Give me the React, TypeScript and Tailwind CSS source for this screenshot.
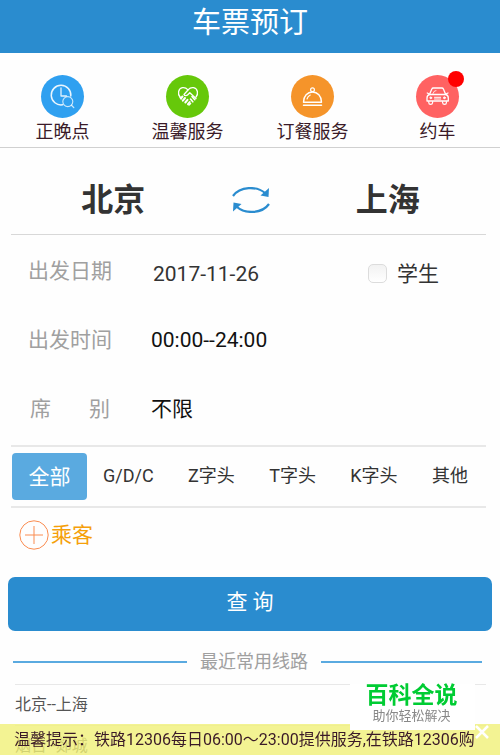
import { useState } from "react";
import type { ReactNode } from "react";

type Service = { label: string; color: string; icon: ReactNode; badge?: boolean };

const stroke = {
  fill: "none",
  stroke: "#fff",
  strokeLinecap: "round" as const,
  strokeLinejoin: "round" as const,
};

const services: Service[] = [
  {
    label: "正晚点",
    color: "bg-[#2fa0f0]",
    icon: (
      <svg viewBox="0 0 43 43" className="size-full" aria-hidden="true" {...stroke}>
        <path d="M21.5 29.8A9.800 9.800 0 1 1 29.800 21" strokeWidth="1.5" strokeOpacity=".9" />
        <path d="M20 13v8h5.5" strokeWidth="1.3" strokeOpacity=".85" />
        <circle cx="26.8" cy="26.6" r="5" strokeWidth="1.1" strokeOpacity=".75" />
        <path d="m30.5 30.3 2.3 2.3" strokeWidth="1.3" strokeOpacity=".75" />
      </svg>
    ),
  },
  {
    label: "温馨服务",
    color: "bg-[#66c80a]",
    icon: (
      <svg viewBox="0 0 43 43" className="size-full" aria-hidden="true" {...stroke}>
        <path
          d="M14 22c-2.500-3-2-8.500 2.500-9.300 2.500-.4 4 .6 5.500 2.200 1.500-1.600 3-2.600 5.500-2.200 4.500.8 5 6.300 2.500 9.300"
          strokeWidth="1.3"
        />
        <path d="m22 15-4 4.500c.6 1.600 2.800 1.300 3.800.2l2-2L30 23.500M14 22l1.500 1.700" strokeWidth="1.300" />
        <path d="m16.500 21.500-1.700 2M19 23l-2.200 2.700M21.500 24.800l-2.200 2.700M23.700 27l-1.700 2.200" strokeWidth="2" />
        <path d="m26 21.500 2.800 3.200M24.500 24l2.300 2.800M24.500 28.500l-1.500 1.500" strokeWidth="1.600" />
      </svg>
    ),
  },
  {
    label: "订餐服务",
    color: "bg-[#f5942a]",
    icon: (
      <svg viewBox="0 0 43 43" className="size-full" aria-hidden="true" {...stroke}>
        <circle cx="21.500" cy="14.700" r="1.900" strokeWidth="1.200" />
        <path d="M12.500 27.300c0-6.300 4-10.300 9-10.300s9 4 9 10.300z" strokeWidth="1.400" />
        <path d="M12.500 30.300h18" strokeWidth="1.500" />
        <path d="M16 24c.5-2 1.600-3.300 3.300-4" strokeWidth="1.100" />
      </svg>
    ),
  },
  {
    label: "约车",
    color: "bg-[#ff6262]",
    badge: true,
    icon: (
      <svg viewBox="0 0 43 43" className="size-full" aria-hidden="true" {...stroke}>
        <path d="M13.500 19.500 15.800 14c.3-.8.8-1 1.500-1h8.600c.8 0 1.200.3 1.500 1l2.300 5.500" strokeWidth="1.300" />
        <path d="M13.500 19.500h16.200c1.800.4 2.600 1.500 2.600 3.500V26H11v-3c0-2 .8-3.100 2.500-3.500Z" strokeWidth="1.300" />
        <path d="M12.800 26.500v1.300c0 2.200 3.600 2.200 3.800 0v-1.300M26.600 26.500v1.300c.2 2.200 3.800 2.200 3.800 0v-1.300M11.200 18l1.600.8M32 18l-1.600.8" strokeWidth="1.200" />
        <circle cx="14.800" cy="22.800" r=".9" fill="#fff" />
        <circle cx="28.400" cy="22.800" r=".9" fill="#fff" />
        <path d="M18.500 22.300h6.200M18.500 24h6.200" strokeWidth="1" />
        <path d="m17 18.500 1.500-2.500 1.500-.3" strokeWidth=".8" />
      </svg>
    ),
  },
];

const trainTypes = ["G/D/C", "Z字头", "T字头", "K字头", "其他"];
const recentRoutes = ["北京--上海", "烟台--郯城"];

function Field({ label, children }: { label: ReactNode; children: ReactNode }) {
  return (
    <div className="flex h-[69px] items-center text-[21px] leading-6">
      <span className="flex w-[124px] shrink-0 pl-[17px] text-[#a0a0a0]">{label}</span>
      {children}
    </div>
  );
}

export default function App() {
  const [student, setStudent] = useState(false);
  const [cities, setCities] = useState(["北京", "上海"]);
  const [noticeOpen, setNoticeOpen] = useState(true);

  return (
    <div className="relative min-h-screen bg-[#fefefe] font-[Roboto,'Noto_Sans_CJK_SC',sans-serif] text-[#333]">
      <header className="flex h-[53px] justify-center bg-[#2a8ccf]">
        <h1 className="text-[29px] leading-[46px] text-white">车票预订</h1>
      </header>

      <nav className="grid h-[95px] grid-cols-4 border-b border-[#d0d0d0] pt-[22px]">
        {services.map((s) => (
          <button key={s.label} type="button" className="flex flex-col items-center">
            <span className={`relative size-[43px] shrink-0 rounded-full ${s.color}`}>
              {s.icon}
              {s.badge && <span className="absolute -top-1 -right-[5px] size-4 rounded-full bg-[#f00]" />}
            </span>
            <span className="text-[18px] leading-7 text-[#3a1a28]">{s.label}</span>
          </button>
        ))}
      </nav>

      <main>
        <div className="mr-[14px] ml-[11px]">
          <section className="grid h-[87px] grid-cols-[1fr_38px_1fr] items-center border-b border-[#d8d8d8] pt-[18px] pl-1 text-[32px] leading-10 font-bold">
            <button type="button" className="pr-5 text-center">{cities[0]}</button>
            <button type="button" aria-label="交换" onClick={() => setCities([cities[1], cities[0]])}>
              <svg viewBox="0 0 38 26" className="h-[26px] w-[38px]" fill="none" stroke="#2a8ccf" strokeWidth="2.2" aria-hidden="true">
                <path d="M1 9C8-1 25-1 33 6" />
                <path d="m37 1-.5 9-8-1.500Z" fill="#2a8ccf" stroke="none" />
                <path d="M37 17c-7 10-24 10-32 3" />
                <path d="m1 25 .500-9 8 1.500Z" fill="#2a8ccf" stroke="none" transform="translate(0 -.5)" />
              </svg>
            </button>
            <button type="button" className="pl-5 text-center">{cities[1]}</button>
          </section>

          <section className="border-b-2 border-[#e8e8e8] pt-px pb-0.5">
            <Field label="出发日期">
              <button type="button" className="pt-1.5 pl-[18px]">2017-11-26</button>
              <label className="mr-[47px] ml-auto flex items-center gap-2.5 pt-1.5">
                <input
                  type="checkbox"
                  checked={student}
                  onChange={(e) => setStudent(e.target.checked)}
                  className="size-[19px] appearance-none rounded-[5px] border border-[#dcdcdc] bg-linear-to-b from-[#f2f2f2] to-white checked:bg-[#5aaae0]"
                />
                学生
              </label>
            </Field>
            <Field label="出发时间">
              <button type="button" className="pl-4 text-[#111]">00:00--24:00</button>
            </Field>
            <Field
              label={
                <span className="flex w-[84px] justify-between px-0.5">
                  <span>席</span>
                  <span>别</span>
                </span>
              }
            >
              <button type="button" className="pl-4 text-[#111]">不限</button>
            </Field>
          </section>

          <section className="flex h-[61px] items-center justify-between border-b-2 border-[#e8e8e8] pr-[18px] pl-px text-[18px] leading-6">
            <button type="button" className="h-[47px] w-[75px] rounded bg-[#5aaae0] text-[21px] text-white">全部</button>
            <div className="flex flex-1 items-center justify-between pb-0.5 pl-4">
              {trainTypes.map((t) => (
                <button key={t} type="button">{t}</button>
              ))}
            </div>
          </section>

          <button type="button" className="flex h-[69px] items-center gap-0.5 pb-4 pl-2 text-[21px] leading-6 text-[#f5a00a]">
            <svg viewBox="0 0 30 30" className="size-[30px]" fill="none" stroke="#fa8c50" strokeWidth="1" aria-hidden="true">
              <circle cx="15" cy="15" r="14.200" />
              <path d="M15 6v18M6 15h18" />
            </svg>
            乘客
          </button>
        </div>

        <div className="px-2">
          <button type="button" className="h-[54px] w-full rounded-[7px] bg-[#2a8ccf] pb-1 text-[21px] leading-6 text-white">
            查 询
          </button>
        </div>

        <div className="flex h-[53px] items-center gap-[13px] pt-2 pr-[18px] pl-[13px]">
          <span className="h-0.5 flex-[174] bg-[#5aaae0]" />
          <h2 className="text-[18px] leading-6 text-[#a0a0a0]">最近常用线路</h2>
          <span className="h-0.5 flex-[161] bg-[#5aaae0]" />
        </div>

        <ul className="mr-[14px] ml-[15px] text-[16px] leading-5 text-[#555]">
          {recentRoutes.map((r) => (
            <li key={r} className="border-t border-[#e8e8e8] pt-2.5 pb-2.5 last:pb-0">
              <a href="#route">{r}</a>
            </li>
          ))}
        </ul>
      </main>

      {noticeOpen && (
        <aside className="fixed inset-x-0 bottom-0 flex h-[31px] items-center overflow-hidden bg-[#f0f078]/80 pl-[14px] text-[16px] leading-6 text-[#3a1a28]">
          <p className="whitespace-nowrap">温馨提示：铁路12306每日06:00～23:00提供服务,在铁路12306购</p>
          <button type="button" aria-label="关闭" onClick={() => setNoticeOpen(false)} className="absolute top-0 right-2.5">
            <svg viewBox="0 0 16 16" className="size-4" stroke="#fff" strokeWidth="2.500" aria-hidden="true">
              <path d="m2 2 12 12M14 2 2 14" />
            </svg>
          </button>
        </aside>
      )}

      <div className="fixed right-[25px] bottom-[25px] flex h-[46px] w-[125px] flex-col items-center bg-white pr-0.5">
        <strong className="text-[23px] leading-6 font-bold text-[#00cc33]">百科全说</strong>
        <span className="text-[13px] leading-4 text-[#888]">助你轻松解决</span>
      </div>
    </div>
  );
}
